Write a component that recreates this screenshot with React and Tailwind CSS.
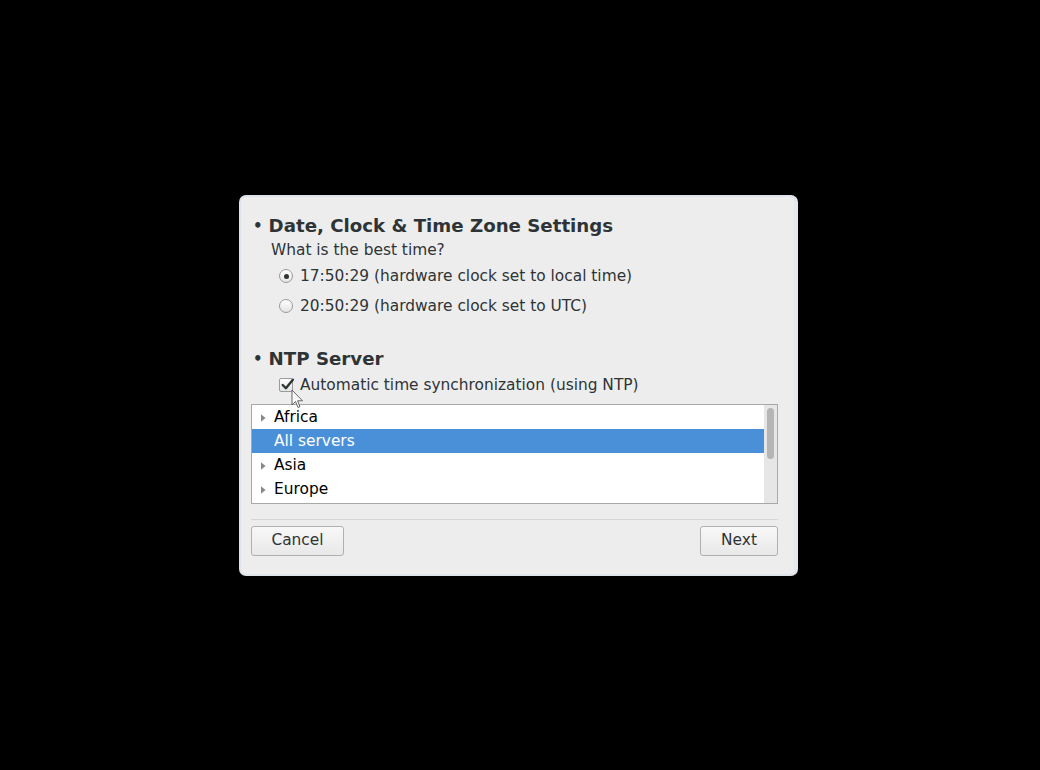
const font = { fontFamily: '"DejaVu Sans", "Liberation Sans", sans-serif' };

function Radio({ checked }) {
  return (
    <span className="flex h-[14px] w-[14px] items-center justify-center rounded-full border border-[#9a9a9a] bg-gradient-to-b from-white to-[#e4e4e4]">
      {checked && <span className="h-[5px] w-[5px] rounded-full bg-[#2e3436]" />}
    </span>
  );
}

function Checkbox() {
  return (
    <span className="relative flex h-[14px] w-[14px] items-center justify-center rounded-[2px] border border-[#9a9a9a] bg-gradient-to-b from-white to-[#e4e4e4]">
      <svg viewBox="0 0 14 14" className="absolute -top-[2px] left-[0px] h-[15px] w-[15px]">
        <path d="M2.5 7.5 L5.5 10.5 L12 2.5" fill="none" stroke="#2e3436" strokeWidth="2.2" strokeLinecap="round" strokeLinejoin="round" />
      </svg>
    </span>
  );
}

function Expander() {
  return (
    <svg viewBox="0 0 6 10" className="h-[10px] w-[5px]">
      <path d="M0 0.5 L5.5 5 L0 9.5 Z" fill="#8a8a8a" />
    </svg>
  );
}

function Cursor() {
  return (
    <svg viewBox="0 0 14 22" className="pointer-events-none absolute left-[40px] top-[14px] h-[22px] w-[14px]">
      <path d="M1 1 L1 16 L4.5 12.5 L7 18.5 L9 17.6 L6.6 11.8 L11.5 11.8 Z" fill="#fafafa" stroke="#555" strokeWidth="0.9" strokeLinejoin="round" />
    </svg>
  );
}

const rows = [
  { name: "Africa", expander: true },
  { name: "All servers", selected: true },
  { name: "Asia", expander: true },
  { name: "Europe", expander: true },
];

const body = "text-[15.4px] leading-[20px]";
const heading = "flex items-center gap-[6px] pl-[2px] text-[18.2px] font-bold leading-[22px]";

export default function App() {
  return (
    <div className="h-[770px] w-[1040px] overflow-hidden bg-black pl-[239px] pt-[195px]" style={font}>
      <div className="flex h-[381px] w-[559px] flex-col rounded-[7px] border-2 border-r-4 border-[#dfe4ea] border-r-[#e3e9f0] bg-[#ededed] pl-[10px] pr-[16px] text-[#2e3436]">
        <div className={`mt-[18px] ${heading}`}>
          <span className="text-[15px]">•</span>
          <span>Date, Clock &amp; Time Zone Settings</span>
        </div>
        <div className={`mt-[3px] pl-[20px] ${body}`}>What is the best time?</div>
        <div className={`mt-[6px] flex items-center gap-[7px] pl-[28px] ${body}`}>
          <Radio checked />
          <span>17:50:29 (hardware clock set to local time)</span>
        </div>
        <div className={`mt-[10px] flex items-center gap-[7px] pl-[28px] ${body}`}>
          <Radio />
          <span>20:50:29 (hardware clock set to UTC)</span>
        </div>

        <div className={`mt-[32px] ${heading}`}>
          <span className="text-[15px]">•</span>
          <span>NTP Server</span>
        </div>
        <div className={`relative mt-[5px] flex items-center gap-[7px] pl-[28px] ${body}`}>
          <Checkbox />
          <span>Automatic time synchronization (using NTP)</span>
          <Cursor />
        </div>

        <div className="mt-[9px] flex h-[100px] border border-[#a8a8a8] bg-white">
          <div className="flex-1">
            {rows.map((r) => (
              <div
                key={r.name}
                className={`flex h-[24px] items-center pt-[1px] text-[15.4px] ${r.selected ? "bg-[#4a90d9] text-white" : "text-black"}`}
              >
                <span className="flex w-[22px] items-center justify-center">{r.expander && <Expander />}</span>
                <span>{r.name}</span>
              </div>
            ))}
          </div>
          <div className="flex w-[13px] justify-center bg-[#e6e6e6] pt-[3px]">
            <div className="h-[51px] w-[7px] rounded-full bg-[#b5b5b5]" />
          </div>
        </div>

        <div className="mt-[15px] h-px bg-[#d6d6d6]" />

        <div className="mt-[6px] flex justify-between">
          <button className="h-[30px] w-[93px] rounded-[3px] border border-[#b0b0b0] bg-gradient-to-b from-[#f8f8f8] to-[#e8e8e8] text-[15.4px] text-[#2e3436]">
            Cancel
          </button>
          <button className="h-[30px] w-[78px] rounded-[3px] border border-[#b0b0b0] bg-gradient-to-b from-[#f8f8f8] to-[#e8e8e8] text-[15.4px] text-[#2e3436]">
            Next
          </button>
        </div>
      </div>
    </div>
  );
}
